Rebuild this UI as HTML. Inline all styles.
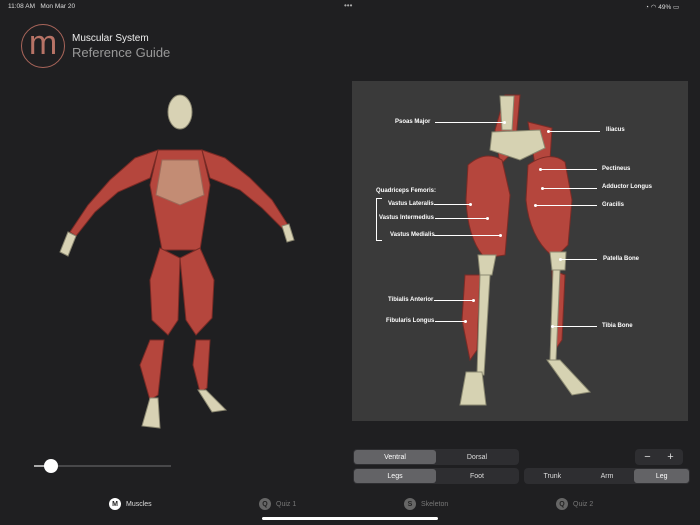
<!DOCTYPE html>
<html><head><meta charset="utf-8"><style>
*{margin:0;padding:0;box-sizing:border-box}
body{width:700px;height:525px;background:#1f1f21;font-family:"Liberation Sans",sans-serif;color:#fff;position:relative;overflow:hidden}
.a{position:absolute}
.seg{position:absolute;background:#2e2e31;border-radius:4px;display:flex;font-size:7px;color:#ddd;padding:1px}
.seg div{flex:1;display:flex;align-items:center;justify-content:center;border-radius:3px}
.seg .on{background:#636366;color:#fff}
.lbl{position:absolute;font-size:6px;font-weight:bold;color:#fff;white-space:nowrap;line-height:7px}
.ln{position:absolute;height:1px;background:#fff}
.dot{position:absolute;width:3px;height:3px;border-radius:50%;background:#fff}
.tab{position:absolute;top:498px;font-size:7px;color:#777;display:flex;align-items:center;gap:5px}
.tab i{font-style:normal;width:12px;height:12px;border-radius:50%;background:#666;color:#222;font-size:7px;font-weight:bold;display:flex;align-items:center;justify-content:center}
</style></head><body>
<div class="a" style="left:8px;top:3px;font-size:6.5px;color:#ddd">11:08 AM&nbsp;&nbsp; Mon Mar 20</div>
<div class="a" style="left:344px;top:1px;font-size:8px;color:#aaa">•••</div>
<div class="a" style="left:645px;top:3px;font-size:6.5px;color:#ddd">◔ ◠ 49% ▭</div>
<div class="a" style="left:21px;top:24px;width:44px;height:44px;border:1px solid #a9655a;border-radius:50%;color:#b77366;font-size:34px;text-align:center;line-height:36px;font-weight:300">m</div>
<div class="a" style="left:72px;top:33px;font-size:10px;color:#eee">Muscular System</div>
<div class="a" style="left:72px;top:45px;font-size:13px;color:#999">Reference Guide</div>

<svg class="a" style="left:50px;top:88px" width="250" height="345" viewBox="50 88 250 345">
<g fill="#b5463d" stroke="#7a2a25" stroke-width="1">
<path d="M158 150 L202 150 L210 185 L200 250 L162 250 L150 185 Z"/>
<path d="M158 150 L135 158 L110 180 L88 205 L70 232 L76 236 L95 212 L118 192 L150 178 Z"/>
<path d="M202 150 L225 158 L250 178 L272 200 L288 225 L282 228 L262 208 L240 190 L210 178 Z"/>
<path d="M160 248 L180 258 L178 320 L168 335 L152 320 L150 280 Z"/>
<path d="M200 248 L180 258 L186 320 L196 335 L212 318 L214 280 Z"/>
<path d="M150 340 L164 340 L158 395 L150 400 L140 365 Z"/>
<path d="M196 340 L210 340 L207 388 L200 392 L193 365 Z"/>
</g>
<g fill="#d8d2b4" stroke="#8a8670" stroke-width="1">
<ellipse cx="180" cy="112" rx="12" ry="17"/>
<path d="M162 160 L198 160 L204 195 L180 205 L156 195 Z" fill="#cfc6a2" opacity=".55"/>
<path d="M150 398 L158 398 L160 428 L142 426 Z"/>
<path d="M198 390 L206 390 L226 410 L212 412 Z"/>
<path d="M68 232 L76 236 L68 256 L60 252 Z"/>
<path d="M282 226 L289 224 L294 240 L287 242 Z"/>
</g>
</svg>

<div class="a" style="left:352px;top:81px;width:336px;height:340px;background:#3a3a3a"></div>
<svg class="a" style="left:352px;top:81px" width="336" height="340" viewBox="352 81 336 340">
<g fill="#b5463d" stroke="#7b2b26" stroke-width="1">
<path d="M505 95 L520 95 L515 150 L500 165 L495 130 Z"/>
<path d="M528 122 L552 128 L550 160 L535 165 Z"/>
<path d="M468 165 Q485 150 502 160 L510 195 L505 255 L485 258 Q468 240 466 200 Z"/>
<path d="M528 165 Q550 150 565 162 L572 200 L568 245 L555 258 Q530 240 526 200 Z"/>
<path d="M465 275 L480 275 L477 350 L470 360 L462 320 Z"/>
<path d="M552 270 L565 275 L562 340 L555 350 Z"/>
</g>
<g fill="#d6d2b2" stroke="#8c8a72" stroke-width="1">
<path d="M500 96 L514 96 L512 130 L502 130 Z"/>
<path d="M492 132 L540 130 L545 148 L520 160 L490 150 Z"/>
<path d="M478 255 L496 255 L492 275 L480 275 Z"/>
<path d="M550 252 L566 252 L565 270 L552 270 Z"/>
<path d="M480 275 L490 275 L484 375 L477 375 Z"/>
<path d="M553 270 L560 270 L556 360 L550 360 Z"/>
<path d="M466 372 L482 372 L486 405 L460 405 Z"/>
<path d="M547 360 L560 360 L590 392 L572 395 Z"/>
</g>
</svg>
<div class="lbl" style="left:395px;top:119px">Psoas Major</div><div class="ln" style="left:435px;top:122px;width:69px"></div><div class="dot" style="left:503px;top:121px"></div>
<div class="lbl" style="left:606px;top:127px">Iliacus</div><div class="ln" style="left:548px;top:131px;width:52px"></div><div class="dot" style="left:547px;top:130px"></div>
<div class="lbl" style="left:602px;top:166px">Pectineus</div><div class="ln" style="left:540px;top:169px;width:57px"></div><div class="dot" style="left:539px;top:168px"></div>
<div class="lbl" style="left:602px;top:184px">Adductor Longus</div><div class="ln" style="left:542px;top:188px;width:55px"></div><div class="dot" style="left:541px;top:187px"></div>
<div class="lbl" style="left:602px;top:202px">Gracilis</div><div class="ln" style="left:535px;top:205px;width:62px"></div><div class="dot" style="left:534px;top:204px"></div>
<div class="lbl" style="left:376px;top:188px">Quadriceps Femoris:</div>
<div class="a" style="left:376px;top:198px;width:6px;height:43px;border:1px solid #fff;border-right:none"></div>
<div class="lbl" style="left:388px;top:201px">Vastus Lateralis</div><div class="ln" style="left:434px;top:204px;width:36px"></div><div class="dot" style="left:469px;top:203px"></div>
<div class="lbl" style="left:379px;top:215px">Vastus Intermedius</div><div class="ln" style="left:435px;top:218px;width:52px"></div><div class="dot" style="left:486px;top:217px"></div>
<div class="lbl" style="left:390px;top:232px">Vastus Medialis</div><div class="ln" style="left:434px;top:235px;width:66px"></div><div class="dot" style="left:499px;top:234px"></div>
<div class="lbl" style="left:603px;top:256px">Patella Bone</div><div class="ln" style="left:560px;top:259px;width:37px"></div><div class="dot" style="left:559px;top:258px"></div>
<div class="lbl" style="left:388px;top:297px">Tibialis Anterior</div><div class="ln" style="left:434px;top:300px;width:39px"></div><div class="dot" style="left:472px;top:299px"></div>
<div class="lbl" style="left:386px;top:318px">Fibularis Longus</div><div class="ln" style="left:435px;top:321px;width:30px"></div><div class="dot" style="left:464px;top:320px"></div>
<div class="lbl" style="left:602px;top:323px">Tibia Bone</div><div class="ln" style="left:552px;top:326px;width:45px"></div><div class="dot" style="left:551px;top:325px"></div>

<div class="a" style="left:34px;top:465px;width:137px;height:2px;background:#48484a"></div>
<div class="a" style="left:34px;top:465px;width:17px;height:2px;background:#aaa"></div>
<div class="a" style="left:44px;top:459px;width:14px;height:14px;border-radius:50%;background:#fff"></div>

<div class="seg" style="left:353px;top:449px;width:166px;height:16px"><div class="on">Ventral</div><div>Dorsal</div></div>
<div class="seg" style="left:353px;top:468px;width:166px;height:16px"><div class="on">Legs</div><div>Foot</div></div>
<div class="seg" style="left:524px;top:468px;width:166px;height:16px"><div>Trunk</div><div>Arm</div><div class="on">Leg</div></div>
<div class="seg" style="left:635px;top:449px;width:48px;height:16px;font-size:11px"><div>−</div><div>+</div></div>

<div class="tab" style="left:109px;color:#ddd"><i style="background:#fff">M</i>Muscles</div>
<div class="tab" style="left:259px"><i>Q</i>Quiz 1</div>
<div class="tab" style="left:404px"><i>S</i>Skeleton</div>
<div class="tab" style="left:556px"><i>Q</i>Quiz 2</div>
<div class="a" style="left:262px;top:517px;width:176px;height:3px;border-radius:2px;background:#fff"></div>
</body></html>
